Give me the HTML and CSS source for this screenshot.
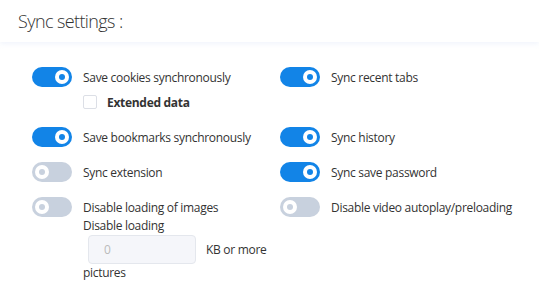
FILE: index.html
```html
<!DOCTYPE html>
<html lang="en">
<head>
  <meta charset="UTF-8" />
  <title>Sync settings</title>
  <link rel="stylesheet" href="styles.css">
</head>
<body>

  <div class="header">
    <h2>Sync settings<span class="colon">:</span></h2>
  </div>

  <div class="settings">
    <div class="cell">
      <div class="item">
        <span class="switch on"><span class="knob"></span></span>
        <span class="label">Save cookies synchronously</span>
      </div>
      <label class="check">
        <span class="box"></span>
        <span>Extended data</span>
      </label>
    </div>
    <div class="cell">
      <div class="item">
        <span class="switch on"><span class="knob"></span></span>
        <span class="label">Sync recent tabs</span>
      </div>
    </div>

    <div class="cell">
      <div class="item">
        <span class="switch on"><span class="knob"></span></span>
        <span class="label">Save bookmarks synchronously</span>
      </div>
    </div>
    <div class="cell">
      <div class="item">
        <span class="switch on"><span class="knob"></span></span>
        <span class="label">Sync history</span>
      </div>
    </div>

    <div class="cell">
      <div class="item">
        <span class="switch"><span class="knob"></span></span>
        <span class="label">Sync extension</span>
      </div>
    </div>
    <div class="cell">
      <div class="item">
        <span class="switch on"><span class="knob"></span></span>
        <span class="label">Sync save password</span>
      </div>
    </div>

    <div class="cell">
      <div class="item">
        <span class="switch"><span class="knob"></span></span>
        <span class="label">Disable loading of images</span>
      </div>
      <div class="sub">
        <div>Disable loading</div>
        <div class="size-row">
          <input type="text" placeholder="0" disabled>
          <span>KB or more</span>
        </div>
        <div>pictures</div>
      </div>
    </div>
    <div class="cell">
      <div class="item">
        <span class="switch"><span class="knob"></span></span>
        <span class="label">Disable video autoplay/preloading</span>
      </div>
    </div>
  </div>

</body>
</html>
```

FILE: styles.css
```css
* {
  box-sizing: border-box;
}

body {
  margin: 0;
  padding: 0;
  font-family: 'Open Sans', 'Noto Sans', Arial, sans-serif;
  background-color: white;
  color: #333;
  font-size: 12px;
  letter-spacing: -0.3px;
}

.header {
  height: 42px;
  padding-left: 18px;
  display: flex;
  align-items: center;
  background: white;
  box-shadow: 0 2px 5px rgba(225, 230, 248, 0.45);
}

h2 {
  margin: 0;
  font-size: 18px;
  font-weight: 300;
  color: #333;
  letter-spacing: -0.6px;
}

.colon {
  margin-left: 4px;
}

.settings {
  display: grid;
  grid-template-columns: 248px 1fr;
  row-gap: 15px;
  padding: 25px 0 0 32px;
}

.item {
  display: flex;
  align-items: center;
  height: 20px;
}

.label {
  margin-left: 11px;
  white-space: nowrap;
}

.switch {
  width: 40px;
  height: 20px;
  border-radius: 10px;
  background-color: #c8d1de;
  display: flex;
  align-items: center;
  padding: 0 3px;
  flex-shrink: 0;
}

.switch.on {
  background-color: #1284e7;
  justify-content: flex-end;
}

.knob {
  width: 14px;
  height: 14px;
  border-radius: 50%;
  background: white;
  display: flex;
  align-items: center;
  justify-content: center;
}

.knob::after {
  content: "";
  width: 6px;
  height: 6px;
  border-radius: 50%;
  background-color: #c8d1de;
}

.switch.on .knob::after {
  background-color: #1284e7;
}

.check {
  display: flex;
  align-items: center;
  height: 20px;
  margin-top: 5px;
  margin-left: 51px;
  font-weight: bold;
}

.box {
  width: 14px;
  height: 14px;
  border: 1px solid #dcdfe6;
  border-radius: 2px;
  margin-right: 10px;
}

.sub {
  margin-left: 51px;
  line-height: 18px;
}

.size-row {
  display: flex;
  align-items: center;
  padding-left: 5px;
}

.size-row input {
  width: 108px;
  height: 29px;
  padding: 0 15px;
  font-size: 12px;
  font-family: inherit;
  background: #f5f6fa;
  border: 1px solid #e4e7ed;
  border-radius: 4px;
  outline: none;
}

.size-row input::placeholder {
  color: #bbb;
}

.size-row span {
  margin-left: 10px;
}
```
